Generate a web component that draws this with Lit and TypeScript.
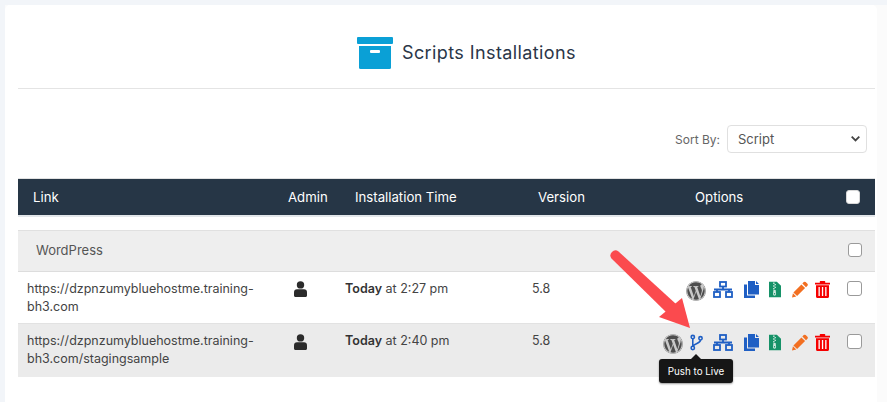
import { LitElement, html, css } from "lit";
import { customElement } from "lit/decorators.js";

const wp = html`<svg class="ic" width="20" height="20" viewBox="0 0 512 512">
  <circle cx="256" cy="256" r="252" fill="#4d4d4d"/>
  <path fill="#c9c9c9" d="M256 8C119.300 8 8 119.200 8 256c0 136.700 111.300 248 248 248s248-111.300 248-248C504 119.200 392.700 8 256 8zM33 256c0-32.300 6.900-63 19.300-90.700l106.400 291.400C84.300 420.500 33 344.200 33 256zm223 223c-21.900 0-43-3.200-63-9.100l66.900-194.400 68.500 187.800c.5 1.100 1 2.100 1.600 3.100-23.100 8.100-48 12.600-74 12.600zm30.700-327.500c13.400-.7 25.500-2.100 25.500-2.100 12-1.400 10.600-19.100-1.400-18.400 0 0-36.100 2.800-59.400 2.800-21.900 0-58.700-2.800-58.700-2.800-12-.7-13.400 17.700-1.400 18.400 0 0 11.400 1.400 23.400 2.100l34.700 95.200L200.600 393l-81.200-241.500c13.400-.7 25.500-2.100 25.500-2.100 12-1.400 10.600-19.100-1.400-18.400 0 0-36.100 2.800-59.400 2.800-4.200 0-9.100-.1-14.400-.3C109.600 73 178.100 33 256 33c58 0 110.900 22.200 150.600 58.500-1-.1-1.900-.2-2.900-.2-21.900 0-37.400 19.100-37.400 39.600 0 18.400 10.600 33.900 21.900 52.300 8.500 14.800 18.400 33.900 18.400 61.500 0 19.100-7.300 41.200-17 72.100l-22.200 74.300-80.700-240.100zm81.400 297.200l68.100-196.900c12.700-31.800 17-57.200 17-79.900 0-8.200-.5-15.900-1.500-23 17.400 31.800 27.300 68.200 27.300 104.900 0 82.300-44.600 154.100-110.900 192.900z"/>
</svg>`;
const sitemap = html`<svg class="ic" width="20" height="17" viewBox="0 0 20 17" fill="none" stroke="#1f5fc4" stroke-width="1.800">
  <rect x="7" y="1" width="6" height="4.500"/><rect x="1" y="11" width="6" height="5"/><rect x="13" y="11" width="6" height="5"/>
  <path d="M10 5.500v3M1 8.500h18M4 8.500V11M16 8.500V11"/>
</svg>`;
const copy = html`<svg class="ic" width="15" height="17" viewBox="0 0 15 17">
  <path fill="#1f5fc4" d="M4 0h7v4h4v9.500H4zM12 0l3 3h-3zM0 3.500h3V14.500h8V17H0z"/>
</svg>`;
const zip = html`<svg class="ic" width="12" height="17" viewBox="0 0 13 17">
  <path fill="#169268" d="M0 0h8.500L13 4.500V17H0z"/>
  <path fill="#cfe8de" d="M4.500 1H6v1.500H4.500zM6 2.500h1.500V4H6zM4.500 4H6v1.500H4.500zM6 5.500h1.500V7H6zM4.500 7H6v1.500H4.500zM4.800 9h2.400l.5 4.500a1.700 1.700 0 0 1-3.400 0z"/>
  <circle cx="6" cy="13.200" r=".8" fill="#169268"/>
</svg>`;
const pencil = html`<svg class="ic" width="16" height="17" viewBox="0 0 17 17">
  <path fill="#f26f21" d="M12.500.6a1.500 1.500 0 0 1 2 0l1.900 1.900a1.500 1.500 0 0 1 0 2l-1.500 1.500-3.900-3.900zM10 3.100l3.900 3.900-8.500 8.500-3.900-3.900zM1 12.500L4.500 16 0 17z"/>
</svg>`;
const trash = html`<svg class="ic" width="15" height="17" viewBox="0 0 15 17">
  <path fill="#f50000" d="M0 1.700h4.800V.6C4.800.2 5 0 5.400 0h4.200c.4 0 .6.200.6.600v1.100H15v1.700H0zM1 4.300h13V15.500c0 .9-.6 1.500-1.500 1.500h-10C1.600 17 1 16.400 1 15.500z"/>
  <path fill="#fff" d="M3.500 6h1.300v9H3.500zM6.900 6h1.300v9H6.900zM10.200 6h1.300v9h-1.300z"/>
</svg>`;
const branch = html`<svg class="ic" width="13" height="17" viewBox="0 0 14 17" fill="none" stroke="#1f5fc4" stroke-width="1.700">
  <circle cx="3" cy="2.600" r="1.800"/><circle cx="3" cy="14.400" r="1.800"/><circle cx="11.300" cy="4" r="1.800"/>
  <path d="M3 4.400v8.200M11.300 5.800c0 3.600-6 3.400-8.300 6.900"/>
</svg>`;
const user = html`<svg class="user" width="13" height="16" viewBox="0 0 13 16">
  <circle cx="6.500" cy="3.900" r="3.700" fill="#2b2b2b"/>
  <path fill="#2b2b2b" d="M3 8.200h7c1.800 0 3 1.300 3 3V14.500c0 .9-.6 1.500-1.500 1.500h-10C.6 16 0 15.400 0 14.500V11.200c0-1.700 1.200-3 3-3z"/>
</svg>`;

@customElement("app-root")
export class AppRoot extends LitElement {
  static styles = css`
    :host { display: block; height: 402px; background: linear-gradient(to right, #f2f5f9 0 5px, #fbfbfb 5px); font-family: "Inter", "Open Sans", sans-serif; overflow: hidden; position: relative; }
    .topband { height: 5px; background: #f2f5f9; }
    .card { margin-left: 5px; width: 872px; height: 397px; background: #fff; border-radius: 5px 5px 0 0; padding: 0 2px 0 13px; box-sizing: border-box; }
    .head { height: 71px; border-bottom: 1px solid #e4e4e4; display: flex; align-items: center; justify-content: center; gap: 9px; padding: 12px 0 0 40px; }
    .head h1 { margin: 0; font-size: 18px; font-weight: 400; color: #2a3648; letter-spacing: .4px; }
    .head svg { display: block; }
    .sort { display: flex; justify-content: flex-end; align-items: center; gap: 7px; height: 28px; margin-top: 36px; padding-right: 8px; font-size: 12px; color: #666; }
    .select { width: 140px; height: 28px; box-sizing: border-box; border: 1px solid #e0e0e0; border-radius: 4px; display: flex; align-items: center; justify-content: space-between; padding: 0 6px 0 10px; color: #555; font-size: 13px; }
    .thead { display: grid; grid-template-columns: 255px 67px 183px 157px 151px 14px; align-items: center; margin: 25px 0 13px; height: 36px; padding-left: 15px; background: #263646; color: #fff; font-size: 13.200px; border-top: 1px solid #e2e2e2; border-bottom: 2px solid #e2e6ea; }
    .cb { width: 14px; height: 14px; background: #fff; border: 1px solid #9a9a9a; border-radius: 3px; box-sizing: border-box; }
    .thead .cb { border-color: #d8d8d8; }
    .group { display: flex; justify-content: space-between; align-items: center; height: 42px; box-sizing: border-box; background: #eee; border-top: 1px solid #e0e0e0; border-bottom: 1px solid #ddd; padding: 0 13px 2px 18px; font-size: 13px; color: #555; }
    .row { display: grid; grid-template-columns: 267px 51px 187px 1fr auto; height: 52px; border-bottom: 1px solid #e2e2e2; font-size: 12.500px; color: #444; padding: 8px 13px 0 9px; box-sizing: border-box; line-height: 18px; }
    .row.alt { background: #ebebeb; height: 53px; border-bottom: 0; }
    .user { display: block; margin-top: 1px; }
    .alt .user { margin-top: 2px; }
    .row b { font-weight: 600; color: #333; }
    .url { width: 240px; }
    .opts { display: flex; align-items: flex-start; padding-top: 1px; }
    .alt .opts { padding-top: 2px; }
    .opts .cb { width: 15px; height: 15px; margin-left: 17px; }
    .ic { display: block; flex: none; }
    .tight { margin-right: -3px; }
    .g7 { margin-left: 7px; }
    .g10 { margin-left: 10px; }
    .g11 { margin-left: 11px; }
    .arrow { position: absolute; left: 0; top: 0; pointer-events: none; }
    .tip { position: absolute; left: 659px; top: 359px; width: 74px; height: 24px; background: #161616; color: #fff; font-size: 9.800px; border-radius: 3px; display: flex; align-items: center; justify-content: center; box-shadow: 0 1px 2px rgba(0,0,0,.4); }
    .tip::before { content: ""; position: absolute; top: -5px; left: 32px; border: 5px solid transparent; border-top: 0; border-bottom-color: #161616; }
  `;

  render() {
    const icons = html`<span class="g10">${sitemap}</span><span class="g11">${copy}</span><span class="g10">${zip}</span><span class="g11">${pencil}</span><span class="g7">${trash}</span><div class="cb"></div>`;
    return html`
      <div class="topband"></div>
      <div class="card">
        <div class="head">
          <svg width="36" height="32" viewBox="0 0 36 32">
            <rect width="36" height="7" rx="1" fill="#0aa0d6"/>
            <path d="M2 9h32v21.500a1.500 1.500 0 0 1-1.500 1.500h-29A1.500 1.500 0 0 1 2 30.500z" fill="#0aa0d6"/>
            <rect x="13" y="13" width="10" height="3" rx="1" fill="#fff"/>
          </svg>
          <h1>Scripts Installations</h1>
        </div>
        <div class="sort"><span>Sort By:</span>
          <div class="select"><span>Script</span>
            <svg width="9" height="6" viewBox="0 0 9 6" fill="none" stroke="#444" stroke-width="1.800"><path d="M.7.700l3.800 3.800L8.300.7"/></svg>
          </div>
        </div>
        <div class="thead"><span>Link</span><span>Admin</span><span>Installation Time</span><span>Version</span><span>Options</span><div class="cb"></div></div>
        <div class="group"><span>WordPress</span><div class="cb"></div></div>
        <div class="row">
          <div class="url">https://dzpnzumybluehostme.training-bh3.com</div>
          <div>${user}</div>
          <div><b>Today</b> at 2:27 pm</div>
          <div>5.8</div>
          <div class="opts"><span class="tight">${wp}</span>${icons}</div>
        </div>
        <div class="row alt">
          <div class="url">https://dzpnzumybluehostme.training-bh3.com/stagingsample</div>
          <div>${user}</div>
          <div><b>Today</b> at 2:40 pm</div>
          <div>5.8</div>
          <div class="opts">${wp}<span class="g7">${branch}</span>${icons}</div>
        </div>
      </div>
      <svg class="arrow" width="887" height="402" viewBox="0 0 887 402">
        <path d="M611.500 258.500 A5 5 0 0 1 618.500 251.500 L676 304 L668 314 z" fill="#fb4a4e"/>
        <path d="M659 317 L682 298 L690 328z" fill="#fb4a4e"/>
      </svg>
      <div class="tip">Push to Live</div>
    `;
  }
}
